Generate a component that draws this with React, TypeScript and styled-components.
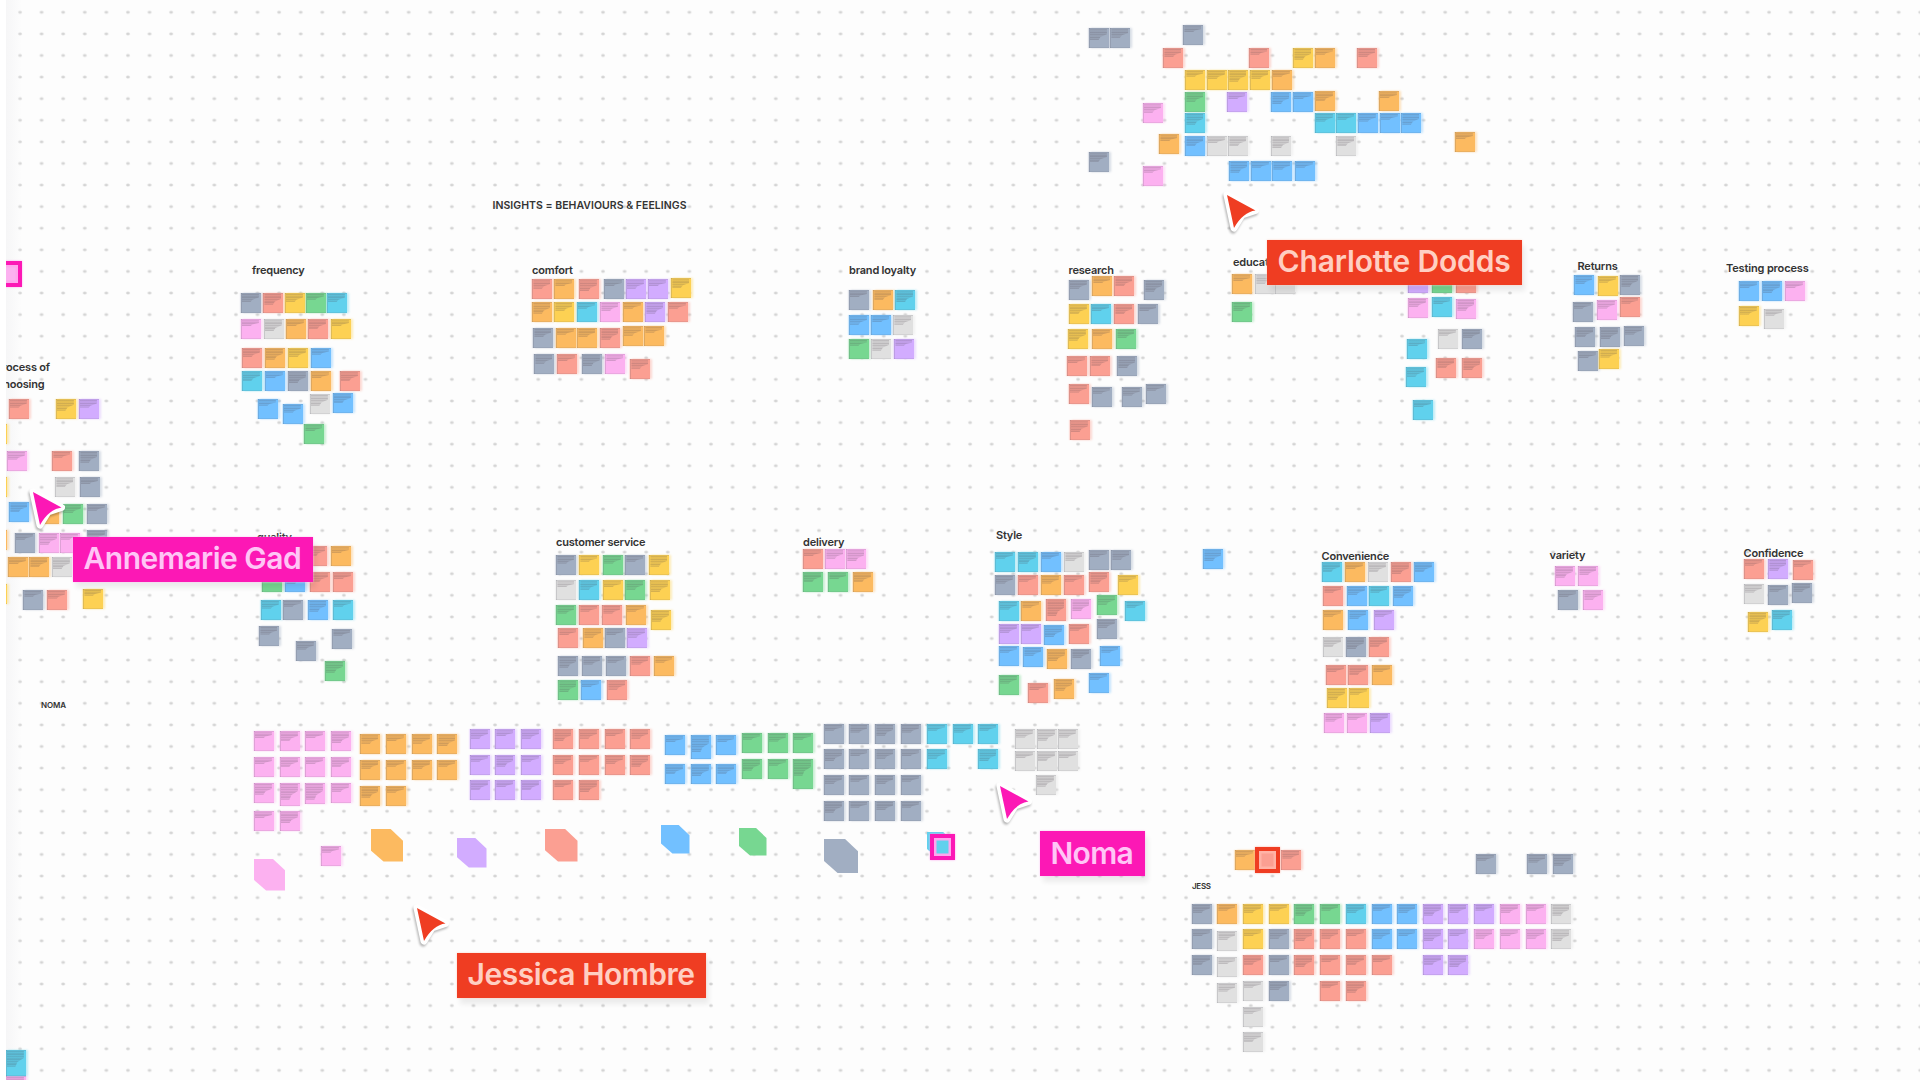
import React from "react";
import styled, { createGlobalStyle } from "styled-components";

const colors = {
  s: "#a1aec2",
  r: "#fb9f92",
  o: "#fcba60",
  y: "#fdd153",
  g: "#77d791",
  c: "#60d1ed",
  b: "#72c0ff",
  k: "#fcb1f0",
  p: "#d2acff",
  w: "#e0e0e0",
};

type Color = keyof typeof colors;

const GlobalStyle = createGlobalStyle`
  body {
    margin: 0;
    background: #fff;
    overflow: hidden;
  }
`;

const Board = styled.main`
  position: relative;
  width: 100vw;
  height: 100vh;
  min-height: 1080px;
  overflow: hidden;
  font-family: Inter, "Liberation Sans", sans-serif;
  background-color: #fdfdfd;
  background-image: radial-gradient(
    ellipse 2.6px 1.9px at center,
    #cacaca 0,
    #dadada 50%,
    rgba(253, 253, 253, 0) 100%
  );
  background-size: 21.6px 21.6px;
  background-position: 9.2px 1.5px;
`;

const Gutter = styled.div`
  position: absolute;
  inset: 0 auto 0 0;
  width: 6px;
  background: #fff;
`;

const EdgeShade = styled.div`
  position: absolute;
  inset: 0 auto 0 6px;
  width: 16px;
  background: linear-gradient(90deg, #f6f6f7, rgba(253, 253, 253, 0));
`;

const Title = styled.h2<{ $x: number; $base: number; $size: number; $gap: number }>`
  position: absolute;
  left: ${({ $x }) => $x}px;
  top: ${({ $base }) => $base - 15}px;
  margin: 0;
  color: #333;
  font-size: ${({ $size }) => $size}px;
  font-weight: 600;
  line-height: 22px;
  letter-spacing: ${({ $gap }) => $gap}px;
  white-space: nowrap;
`;

const Sticky = styled.div<{ $x: number; $y: number; $color: Color; $h: number; $lines: number }>`
  position: absolute;
  left: ${({ $x }) => $x - 0.1}px;
  top: ${({ $y }) => $y - 0.3}px;
  width: 20px;
  height: ${({ $h }) => $h}px;
  background: ${({ $color }) => colors[$color]};
  box-shadow:
    inset 1px 0 0 rgba(90, 90, 100, 0.18),
    inset 0 1px 0 rgba(90, 90, 100, 0.15),
    inset 0 -1px 0 rgba(90, 90, 100, 0.1),
    2px 0 2px ${({ $color }) => colors[$color]}66,
    -1px 0 1px ${({ $color }) => colors[$color]}55;

  &::before {
    content: "";
    position: absolute;
    left: 1px;
    top: 1px;
    width: 17px;
    height: ${({ $lines }) => $lines * 2.5 + 1}px;
    background: repeating-linear-gradient(
      rgba(70, 60, 70, 0.2) 0,
      rgba(70, 60, 70, 0.24) 1px,
      rgba(70, 60, 70, 0.13) 1.5px,
      rgba(70, 60, 70, 0.13) 2.5px
    );
    clip-path: polygon(0 0, 100% 0, 100% 45%, 62% 70%, 50% 100%, 0 100%);
  }
`;

const Shape = styled.div<{ $x: number; $y: number; $size: number; $color: Color }>`
  position: absolute;
  left: ${({ $x }) => $x}px;
  top: ${({ $y }) => $y}px;
  width: ${({ $size }) => $size}px;
  height: ${({ $size }) => $size}px;
  background: ${({ $color }) => colors[$color]};
  clip-path: polygon(0 0, 62% 0, 100% 36%, 100% 100%, 40% 100%, 0 65%);
`;

const Selection = styled.div<{ $x: number; $y: number; $line: string; $ring: string; $fill: Color }>`
  position: absolute;
  left: ${({ $x }) => $x}px;
  top: ${({ $y }) => $y}px;
  box-sizing: border-box;
  width: 25px;
  height: 26px;
  border: 4px solid ${({ $line }) => $line};
  background: ${({ $fill }) => colors[$fill]};
  box-shadow:
    inset 0 0 0 2.5px ${({ $ring }) => $ring},
    0 0 2px ${({ $ring }) => $ring};
`;

const Pointer = styled.svg<{ $x: number; $y: number }>`
  position: absolute;
  left: ${({ $x }) => $x - 8}px;
  top: ${({ $y }) => $y - 8}px;
  width: 48px;
  height: 54px;
  overflow: visible;
  filter: drop-shadow(-1px 2px 1px rgba(0, 0, 0, 0.28));
`;

const NameTag = styled.div<{ $x: number; $y: number; $w: number; $line: string; $ink: string; $gap: number }>`
  position: absolute;
  left: ${({ $x }) => $x}px;
  top: ${({ $y }) => $y}px;
  box-sizing: border-box;
  display: flex;
  align-items: center;
  width: ${({ $w }) => $w}px;
  height: 45px;
  padding: 0 0 2px 10.5px;
  background: ${({ $line }) => $line};
  color: ${({ $ink }) => $ink};
  font-size: 30px;
  font-weight: 600;
  line-height: 1;
  letter-spacing: ${({ $gap }) => $gap}px;
  white-space: nowrap;
  box-shadow:
    0 0 2px ${({ $ink }) => $ink},
    3px 6px 5px rgba(0, 0, 0, 0.07);
`;

// [text, x, baseline, size, letter spacing]
const titles: [string, number, number, number, number][] = [
  ["INSIGHTS = BEHAVIOURS & FEELINGS", 492.5, 210, 10.5, 0.03],
  ["frequency", 252, 273.5, 11, -0.2],
  ["comfort", 532, 273.5, 11, -0.2],
  ["brand loyalty", 849, 273.5, 11, -0.2],
  ["research", 1068.5, 274, 11, -0.2],
  ["education", 1233, 266, 11, -0.2],
  ["Returns", 1577.5, 270, 11, -0.2],
  ["Testing process", 1726, 272, 11, -0.15],
  ["process of", -4.5, 371, 11, -0.2],
  ["choosing", -3, 388, 11, -0.2],
  ["quality", 257, 541, 11, -0.2],
  ["customer service", 556, 546, 11, -0.2],
  ["delivery", 803, 546, 11, -0.2],
  ["Style", 996, 539, 11, -0.2],
  ["Convenience", 1321.5, 559.5, 11, -0.2],
  ["variety", 1549.5, 558.5, 11, -0.2],
  ["Confidence", 1743.5, 556.5, 11, -0.2],
  ["NOMA", 41, 708.5, 8, -0.15],
  ["JESS", 1192, 889.5, 8, -0.3],
];

// One entry per row: "default y | color+x[:own y][/height] ..."
const rows = [
  // loose ideas
  "28.5 | s1089 s1110.5 s1183.5:25.5",
  "48 | r1163.5 r1249.5 y1293.5 o1315 r1357.5",
  "70 | y1185.5 y1207 y1228.5 y1250.5 o1272",
  "92.5 | g1185.5 p1227.5 b1271.5 b1293 o1315:91.5 o1379:91.5",
  "113 | k1143:103.5 c1185.5 c1315 c1336.5 b1358 b1380 b1401.5",
  "136.5 | o1159.5:134.5 b1185.5 w1207 w1228.5 w1271.5 w1336.5 o1455:132.5",
  "161 | s1089:152.5 k1143:166 b1229.5 b1251 b1272.5 b1295",
  // frequency
  "293 | s241 r263.5 y285 g306 c327",
  "319.5 | k241 w264 o286 r308 y331",
  "348 | r242 o265 y288 b311",
  "371.5 | c242 b265 s288 o311 r340",
  "399 | b258 b283:404 w310:394 b333:393.5 g304.5:424.5",
  // comfort
  "279.5 | r532.5 o554.5 r579 s604 p626 p648 y671.5:278.5",
  "302 | o532.5 y554.5 c577 k600.5 o623 p645.5 r668",
  "328 | s533.5 o556 o577.5 r600.5 o623:326.5 o644.5:326",
  "354.5 | s534.5 r557 s582 k605.5 r630.5:359.5",
  // brand loyalty
  "290.5 | s849 o873.5 c895.5",
  "315.5 | b849 b871.5 w893.5",
  "339 | g849 w871.5 p894.5",
  // research
  "280 | s1069 o1092.5:276.5 r1114.5:276.5 s1144.5",
  "304.5 | y1069 c1091 r1114.5 s1138.5",
  "329 | y1068 o1092 g1116.5",
  "356.5 | r1067 r1090.5 s1117.5",
  "387 | r1069:384 s1092 s1122 s1146:384 r1070:420.5",
  // education
  "274.5 | o1232.5 w1255.5 w1275",
  "302 | g1232.5",
  "273.5 | p1408 g1432.5 r1456.5",
  "298 | k1408 c1432.5:297.5 k1456.5:299",
  "329 | w1438 s1462 c1407.5:339.5",
  "358.5 | r1436.5 r1462.5 c1406:367.5 c1413:400.5",
  // returns
  "275 | b1574.5 y1598:276 s1620.5",
  "300 | s1573:302 k1597 r1620.5:297",
  "327.5 | s1575.5 s1600 s1624:326",
  "350 | s1578:351.5 y1599.5:349",
  // testing process
  "281.5 | b1739 b1762 k1785",
  "306 | y1739 w1764.5:309",
  // process of choosing
  "399 | r9 y56 p79",
  "424.5 | y-13",
  "451 | k7 r52.5 s79.5",
  "477.5 | y-13 w55.5 s80",
  "504 | b9.5:502.5 o39 g63 s87",
  "533 | o-13:530 s15 k39 k60 s87:530",
  "557.5 | o8 o29.5 w52",
  "590 | y-13:584 s23.5 r47 y83.5:589",
  "1050 | k6:1076 c6/26",
  // quality
  "546.5 | r307 o331",
  "572.5 | g262.5 b285.5 r310 r333",
  "600 | c261 s283 b308.5 c333",
  "628 | s259.5:626 s332.5:629 s296:641 g325:661",
  // customer service
  "555 | s556.5 y579.5 g603 s625.5 y649.5",
  "580.5 | w556.5 c579.5 y603 g625.5 y650",
  "605 | g556.5 r579.5 r602.5 o626 y651:610",
  "628.5 | r558.5 o583.5 s605.5 p627",
  "656 | s558.5 s582.5 s606.5 r630.5 o654.5",
  "680.5 | g558.5 b581 r607.5",
  // delivery
  "549.5 | r803 k825.5 k846.5",
  "572.5 | g803 g828.5 o853",
  // style
  "552 | c995 c1018 b1041 w1064.5 s1089:550.5 s1111.5:550.5 b1203.5:549.5",
  "575 | s995 r1018 o1041 r1064 r1089.5:572 y1118",
  "601 | c999 o1021.5 r1046.5:599.5/22 k1071.5:599.5 g1097:595.5 c1125.5",
  "624 | p999 p1021 b1044:625.5 r1069 s1097:619",
  "647 | b999:646 b1023.5 o1047:649.5 s1071.5:649 b1100.5:646",
  "679 | g999:675 r1028.5:683.5 o1054.5 b1089:673",
  // convenience
  "562.5 | c1322 o1345 w1368 r1391 b1414",
  "586 | r1323.5 b1347 c1369.5 b1393",
  "610 | o1323 b1348.5 p1374",
  "637.5 | w1323 s1346 r1369",
  "665.5 | r1326 r1348.5 o1372.5",
  "688 | y1327 y1349",
  "713 | k1324.5 k1347 p1370",
  // variety
  "566 | k1555 k1578.5",
  "590.5 | s1558 k1583.5",
  // confidence
  "559 | r1744 p1768.5 r1793:560",
  "584 | w1744 s1768.5:585 s1792.5:583",
  "611 | y1748.5:612 c1772:610",
  // noma's sorted notes
  "731.5 | k254 k280 k305 k331",
  "757.5 | k254 k280 k305 k331",
  "783 | k254 k280/23 k305/21 k331",
  "811.5 | k254 k280",
  "846 | k321",
  "734.5 | o360.5 o386 o412 o437.5",
  "760 | o360.5 o386 o412 o437.5",
  "786 | o360.5 o386",
  "729.5 | p470 p495.5 p521 r553.5 r579 r605 r630.5",
  "755 | p470 p495.5 p521 r553.5 r579 r605 r630.5",
  "780.5 | p470 p495.5 p521 r553.5 r579",
  "735.5 | b665 b691/24 b716.5",
  "764.5 | b665 b691 b716.5",
  "733 | g742 g768 g793",
  "759 | g742 g768 g793/30",
  "724 | s824 s849.5 s875.5 s901 c927 c953 c978.5",
  "749.5 | s824 s849.5 s875.5 s901 c927 c978.5",
  "775 | s824 s849.5 s875.5 s901",
  "801 | s824 s849.5 s875.5 s901",
  "729 | w1015 w1037 w1058",
  "751.5 | w1015 w1037 w1058",
  "775 | w1036",
  // jess's sorted notes
  "854 | o1235:850 r1281.5:850 s1476 s1527.5 s1553",
  "904 | s1192 o1217.5 y1243 y1269 g1294.5 g1320.5 c1346 b1372 b1397.5 p1423 p1448.5 p1474.5 k1500 k1526 w1551.5",
  "929.5 | s1192 w1217.5:931 y1243 s1269 r1294.5 r1320.5 r1346 b1372 b1397.5 p1423 p1448.5 k1474.5 k1500 k1526 w1551.5",
  "955.5 | s1192 w1217.5:957.5 r1243 s1269 r1294.5 r1320.5 r1346 r1372 p1423 p1448.5",
  "981 | w1217.5:983 w1243 s1269 r1320.5 r1346",
  "1007 | w1243",
  "1032.5 | w1243",
];

const notes = rows.flatMap((row) => {
  const [rowY, items] = row.split(" | ");
  return items.split(" ").map((item) => {
    const [place, height] = item.slice(1).split("/");
    const [x, y] = place.split(":");
    return {
      color: item[0] as Color,
      x: Number(x),
      y: Number(y ?? rowY),
      h: Number(height ?? 20),
    };
  });
});

const shapes: [Color, number, number, number][] = [
  ["k", 253.5, 859, 31.5],
  ["o", 370.5, 829, 32.5],
  ["p", 457, 838, 29.5],
  ["r", 545, 829, 32.5],
  ["b", 661, 825, 28.5],
  ["g", 739, 828, 27.5],
  ["s", 824, 839, 34],
  ["c", 927, 832, 26],
];

const magenta = { line: "#fc18b5", ink: "#ffc5f6" };
const red = { line: "#ef3d22", ink: "#ffcfc2" };

const people = [
  { name: "Charlotte Dodds", ...red, at: [1227, 194.5], tag: [1267, 239.5, 254.5], gap: -0.15 },
  { name: "Annemarie Gad", ...magenta, at: [33, 491.5], tag: [73, 536.5, 240], gap: -0.5 },
  { name: "Noma", ...magenta, at: [1000, 786], tag: [1040, 831, 105], gap: -0.7 },
  { name: "Jessica Hombre", ...red, at: [416.5, 908], tag: [457, 952.5, 249], gap: -0.48 },
];

const Cursor = ({ x, y, fill }: { x: number; y: number; fill: string }) => (
  <Pointer $x={x} $y={y} viewBox="-8 -8 48 54">
    <path
      d="M0 0 L28.5 15.5 L15 20 L7 33 Z"
      fill="#fff"
      stroke="#fff"
      strokeWidth="7"
      strokeLinejoin="round"
    />
    <path d="M0 0 L28.5 15.5 Q16 17 7 33 Z" fill={fill} />
  </Pointer>
);

const App = () => {
  return (
    <>
      <GlobalStyle />
      <Board>
        <EdgeShade />
        {titles.map(([text, x, base, size, gap]) => (
          <Title key={text} $x={x} $base={base} $size={size} $gap={gap}>
            {text}
          </Title>
        ))}
        {notes.map(({ color, x, y, h }, i) => (
          <Sticky
            key={i}
            $x={x}
            $y={y}
            $color={color}
            $h={h}
            $lines={h > 20 ? 6 : 2 + ((i * 7) % 5 === 0 ? 2 : i % 2)}
          />
        ))}
        {shapes.map(([color, x, y, size]) => (
          <Shape key={color} $color={color} $x={x} $y={y} $size={size} />
        ))}
        <Selection $x={-3} $y={261} $line={magenta.line} $ring="#ffa6ee" $fill="k" />
        <Selection $x={929.5} $y={834} $line={magenta.line} $ring="#ffa6ee" $fill="c" />
        <Selection $x={1255} $y={846.5} $line={red.line} $ring="#ffb3a6" $fill="r" />
        <Gutter />
        {people.map(({ name, line, ink, at, tag, gap }) => (
          <React.Fragment key={name}>
            <Cursor x={at[0]} y={at[1]} fill={line} />
            <NameTag $x={tag[0]} $y={tag[1]} $w={tag[2]} $line={line} $ink={ink} $gap={gap}>
              {name}
            </NameTag>
          </React.Fragment>
        ))}
      </Board>
    </>
  );
};

export default App;
